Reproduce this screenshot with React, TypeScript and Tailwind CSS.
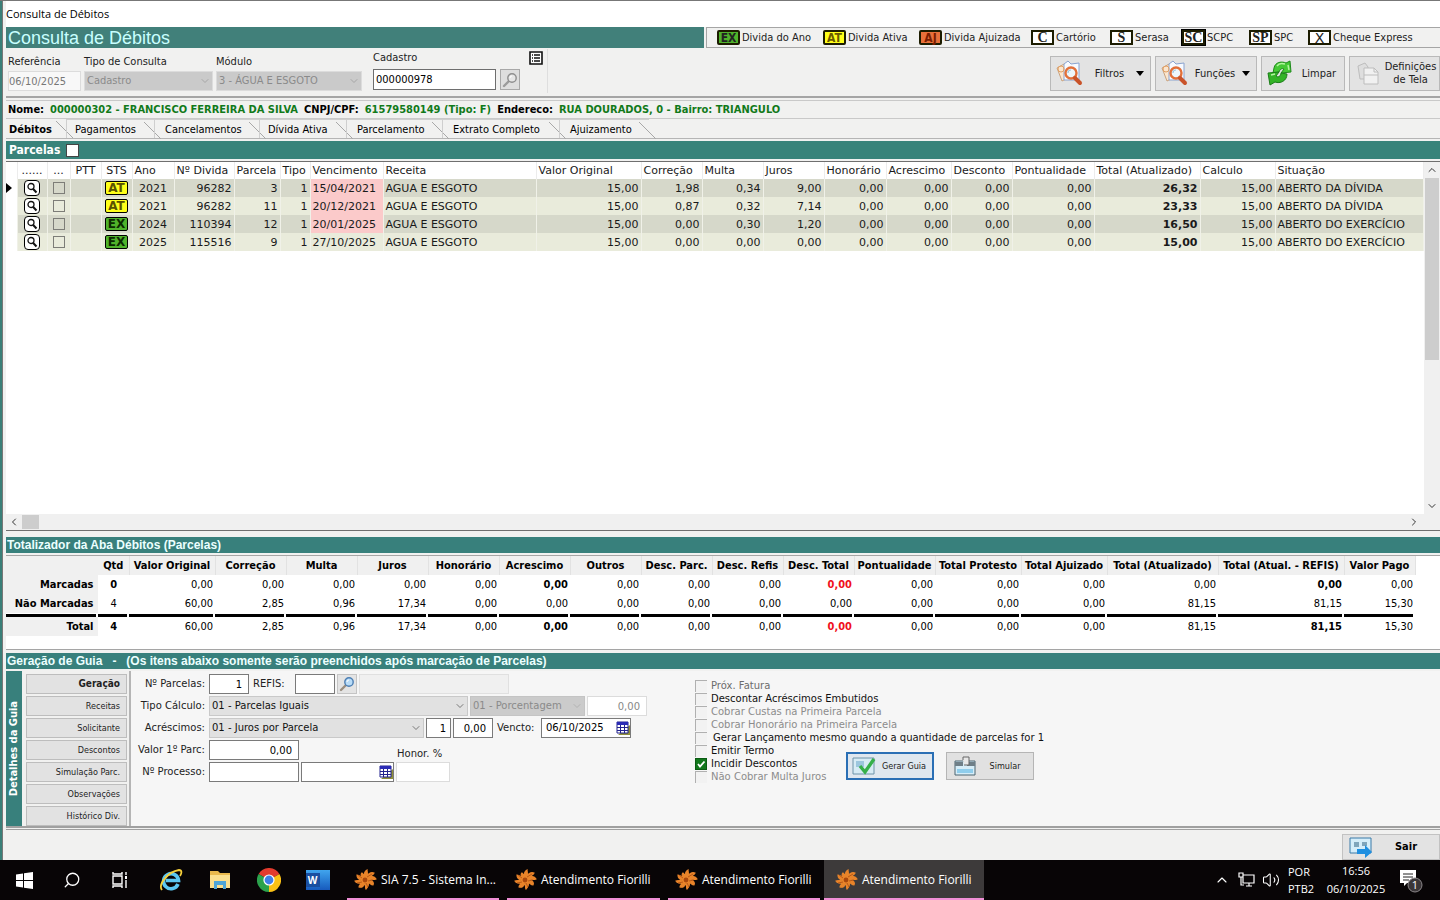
import type { ReactNode } from 'react';
import { ChevronUp, ChevronDown, ChevronLeft, ChevronRight, Search, Volume2 } from 'lucide-react';
import clsx from 'clsx';

const legend = [
  { code: 'EX', label: 'Divida do Ano', width: 'w-[106px]', tone: 'rounded-xs bg-[#4fb32b] text-[12px] font-bold' },
  { code: 'AT', label: 'Divida Ativa', width: 'w-[96px]', tone: 'rounded-xs bg-[#ffff1a] text-[12px] font-bold text-[#6b5a00]' },
  { code: 'AJ', label: 'Divida Ajuizada', width: 'w-[112px]', tone: 'rounded-xs bg-[#e8703a] text-[12px] font-bold text-[#7a1d00]' },
  { code: 'C', label: 'Cartório', width: 'w-[79px]', tone: "bg-white font-['Liberation_Serif',serif] text-[14px] font-bold" },
  { code: 'S', label: 'Serasa', width: 'w-[72px]', tone: "bg-white font-['Liberation_Serif',serif] text-[14px] font-bold" },
  { code: 'SC', label: 'SCPC', width: 'w-[67px]', tone: "bg-white font-['Liberation_Serif',serif] text-[14px] font-bold ring-1 ring-black" },
  { code: 'SP', label: 'SPC', width: 'w-[59px]', tone: "bg-white font-['Liberation_Serif',serif] text-[14px] font-bold" },
  { code: 'X', label: 'Cheque Express', width: 'w-[116px]', tone: "bg-white font-['DejaVu_Sans',sans-serif] text-[14px]" },
];

const tabs = [
  { label: 'Débitos', width: 'w-[60px] pl-[3px]' },
  { label: 'Pagamentos', width: 'w-[88px] pl-2' },
  { label: 'Cancelamentos', width: 'w-[105px] pl-2.5' },
  { label: 'Dívida Ativa', width: 'w-[87px] pl-2' },
  { label: 'Parcelamento', width: 'w-[96px] pl-2.5' },
  { label: 'Extrato Completo', width: 'w-[117px] pl-2.5' },
  { label: 'Ajuizamento', width: 'w-[90px] pl-2.5' },
];

const debtColumns = [
  { title: '', width: 'w-[11px]' },
  { title: '......', width: 'w-[30px]' },
  { title: '...', width: 'w-[23px]' },
  { title: 'PTT', width: 'w-[31px]' },
  { title: 'STS', width: 'w-[31px]' },
  { title: 'Ano', width: 'w-[42px]' },
  { title: 'Nº Divida', width: 'w-[60px]' },
  { title: 'Parcela', width: 'w-[46px]' },
  { title: 'Tipo', width: 'w-[30px]' },
  { title: 'Vencimento', width: 'w-[73px]' },
  { title: 'Receita', width: 'w-[153px]' },
  { title: 'Valor Original', width: 'w-[105px]' },
  { title: 'Correção', width: 'w-[61px]' },
  { title: 'Multa', width: 'w-[61px]' },
  { title: 'Juros', width: 'w-[61px]' },
  { title: 'Honorário', width: 'w-[62px]' },
  { title: 'Acrescimo', width: 'w-[65px]' },
  { title: 'Desconto', width: 'w-[61px]' },
  { title: 'Pontualidade', width: 'w-[82px]' },
  { title: 'Total (Atualizado)', width: 'w-[106px]' },
  { title: 'Calculo', width: 'w-[75px]' },
  { title: 'Situação', width: '' },
];

const debts = [
  {
    status: 'AT', year: '2021', debt: '96282', part: '3', due: '15/04/2021', late: true,
    values: ['15,00', '1,98', '0,34', '9,00', '0,00', '0,00', '0,00', '0,00'],
    total: '26,32', calc: '15,00', situation: 'ABERTO DA DÍVIDA',
  },
  {
    status: 'AT', year: '2021', debt: '96282', part: '11', due: '20/12/2021', late: true,
    values: ['15,00', '0,87', '0,32', '7,14', '0,00', '0,00', '0,00', '0,00'],
    total: '23,33', calc: '15,00', situation: 'ABERTO DA DÍVIDA',
  },
  {
    status: 'EX', year: '2024', debt: '110394', part: '12', due: '20/01/2025', late: true,
    values: ['15,00', '0,00', '0,30', '1,20', '0,00', '0,00', '0,00', '0,00'],
    total: '16,50', calc: '15,00', situation: 'ABERTO DO EXERCÍCIO',
  },
  {
    status: 'EX', year: '2025', debt: '115516', part: '9', due: '27/10/2025', late: false,
    values: ['15,00', '0,00', '0,00', '0,00', '0,00', '0,00', '0,00', '0,00'],
    total: '15,00', calc: '15,00', situation: 'ABERTO DO EXERCÍCIO',
  },
];

const sumColumns = [
  { title: 'Qtd', width: 'w-[31px]' },
  { title: 'Valor Original', width: 'w-[86px]' },
  { title: 'Correção', width: 'w-[71px]' },
  { title: 'Multa', width: 'w-[71px]' },
  { title: 'Juros', width: 'w-[71px]' },
  { title: 'Honorário', width: 'w-[71px]' },
  { title: 'Acrescimo', width: 'w-[71px]' },
  { title: 'Outros', width: 'w-[71px]' },
  { title: 'Desc. Parc.', width: 'w-[71px]' },
  { title: 'Desc. Refis', width: 'w-[71px]' },
  { title: 'Desc. Total', width: 'w-[71px]' },
  { title: 'Pontualidade', width: 'w-[81px]' },
  { title: 'Total Protesto', width: 'w-[86px]' },
  { title: 'Total Ajuizado', width: 'w-[86px]' },
  { title: 'Total (Atualizado)', width: 'w-[111px]' },
  { title: 'Total (Atual. - REFIS)', width: 'w-[126px]' },
  { title: 'Valor Pago', width: 'w-[71px]' },
];

const sums = [
  { name: 'Marcadas', strong: true, cells: ['0', '0,00', '0,00', '0,00', '0,00', '0,00', '0,00', '0,00', '0,00', '0,00', '0,00', '0,00', '0,00', '0,00', '0,00', '0,00', '0,00'] },
  { name: 'Não Marcadas', strong: false, cells: ['4', '60,00', '2,85', '0,96', '17,34', '0,00', '0,00', '0,00', '0,00', '0,00', '0,00', '0,00', '0,00', '0,00', '81,15', '81,15', '15,30'] },
];

const grandTotal = { name: 'Total', strong: true, cells: ['4', '60,00', '2,85', '0,96', '17,34', '0,00', '0,00', '0,00', '0,00', '0,00', '0,00', '0,00', '0,00', '0,00', '81,15', '81,15', '15,30'] };

const steps = ['Geração', 'Receitas', 'Solicitante', 'Descontos', 'Simulação Parc.', 'Observações', 'Histórico Div.'];

const mainOptions = [
  { label: 'Próx. Fatura', disabled: true, strong: true },
  { label: 'Descontar Acréscimos Embutidos' },
  { label: 'Cobrar Custas na Primeira Parcela', disabled: true },
  { label: 'Cobrar Honorário na Primeira Parcela', disabled: true },
  { label: 'Gerar Lançamento mesmo quando a quantidade de parcelas for 1', indent: true },
];

const extraOptions = [
  { label: 'Emitir Termo' },
  { label: 'Incidir Descontos', checked: true },
  { label: 'Não Cobrar Multa Juros', disabled: true },
];

const tasks = [
  { label: 'SIA 7.5 - Sistema In...', style: 'w-[152px] pl-1.5 mr-2' },
  { label: 'Atendimento Fiorilli', style: 'w-[153px] pl-1.5 mr-2' },
  { label: 'Atendimento Fiorilli', style: 'w-[152px] pl-1.5 mr-1' },
  { label: 'Atendimento Fiorilli', style: 'w-[160px] pl-2.5 bg-[#3d3a3a]' },
];

function Badge({ code, tone }: { code: string; tone: string }) {
  return (
    <span className={clsx('inline-flex h-[15px] w-[23px] shrink-0 items-center justify-center border-2 border-[#1c1c00] leading-none', tone)}>
      {code}
    </span>
  );
}

function StatusBadge({ code }: { code: string }) {
  return (
    <span
      className={clsx(
        'mx-auto flex h-[14px] w-[23px] items-center justify-center rounded-xs border border-black text-[12px] font-bold leading-none',
        code === 'AT' ? 'bg-[#ffff1a] text-[#5a5200]' : 'bg-[#4fb32b] text-[#0b2a00]',
      )}
    >
      {code}
    </span>
  );
}

function SearchPapers() {
  return (
    <svg width="28" height="26" viewBox="0 0 28 26">
      <path d="M2 8l7-4 4 14-6 3z" fill="#fbe6cf" stroke="#c9a27e" />
      <path d="M9 4l4-3 3 3 8-1v17H9z" fill="#f7faff" stroke="#8aa3cf" />
      <circle cx="6" cy="9" r="3" fill="none" stroke="#e3a063" />
      <circle cx="16" cy="13" r="5.5" fill="#eef6fb" stroke="#e2703a" strokeWidth="2.4" />
      <path d="M13 13a3 3 0 013-3" fill="none" stroke="#9fc7e0" strokeWidth="1.2" />
      <path d="M20 18l5 5" stroke="#c9532a" strokeWidth="4" strokeLinecap="round" />
    </svg>
  );
}

function Recycle() {
  return (
    <svg width="28" height="26" viewBox="0 0 28 26" strokeLinejoin="round">
      <path d="M8 8c1-6 8-7 12-5l4-2 1 11-10 1 3-4c-2-1-4 0-5 3l-6 1z" fill="#45c935" stroke="#1f8a1b" />
      <path d="M21 14c0 7-7 10-12 8l-5 3-2-12 11-1-3 4c2 2 5 0 5-3z" fill="#33b327" stroke="#1b7d18" />
      <path d="M11 6c2-3 5-3 8-2M5 15l4-1M22 5l1 5" stroke="#b4f5a0" strokeWidth="1.5" fill="none" />
    </svg>
  );
}

function PrintPage() {
  return (
    <svg width="28" height="26" viewBox="0 0 28 26" fill="#f1f1f1" stroke="#bdbdbd">
      <path d="M4 6l7-3 3 4v12H6z" fill="#dedede" />
      <path d="M10 8h10l4 4v12H10z" />
      <path d="M20 8v4h4M10 15h14" fill="none" />
    </svg>
  );
}

function Lens({ muted = false }: { muted?: boolean }) {
  return (
    <svg width="16" height="16" viewBox="0 0 16 16">
      <path d="M7 9l-5 5" stroke={muted ? '#9b9b9b' : '#9b8f80'} strokeWidth="2.4" strokeLinecap="round" />
      <circle cx="10" cy="6" r="4.2" fill={muted ? '#e6e6e6' : '#b9dcf7'} stroke={muted ? '#8e8e8e' : '#4c7fb4'} strokeWidth="1.4" />
      <path d="M8 6a2 2 0 012-2" stroke="#fff" fill="none" />
    </svg>
  );
}

function Calendar() {
  return (
    <svg width="14" height="14" viewBox="0 0 14 14" className="shrink-0">
      <path d="M2 14h12V4z" fill="#8f8f3a" />
      <path d="M1 1h11v11H1z" fill="#fff" stroke="#23238e" />
      <path d="M1 1h11v3H1z" fill="#2b2bb5" />
      <path d="M1 6.5h11M1 9.5h11M4.5 4v8M8.5 4v8" stroke="#23238e" />
    </svg>
  );
}

function Burst() {
  return (
    <svg width="24" height="22" viewBox="0 0 24 22">
      <path
        d="M12 7c-1-3 0-5 2-6 0 2 1 3 0 6 2-3 4-4 7-3-1 2-3 2-4 4 3-1 5 0 6 2-2 1-4 0-6 1 3 1 4 3 3 5-2 0-3-2-5-3 1 3 0 5-2 7-1-2 0-4-1-6-1 3-3 5-6 4 0-2 2-3 3-5-3 2-6 1-7-1 2-1 4 0 6-1-3-1-4-3-4-5 2 0 4 2 5 3-1-2-1-4 0-5 1 1 2 2 3 3z"
        fill="#e8842a"
        stroke="#e8842a"
        strokeWidth="1.2"
      />
      <circle cx="12" cy="11" r="2.4" fill="#a8480d" />
      <path d="M14 8l5-3M15 12l5-1M9 9L5 6M9 13l-5 1M13 14l2 4" stroke="#a8480d" strokeWidth=".7" />
    </svg>
  );
}

function ToolButton({ icon, width, menu, children }: { icon: ReactNode; width: string; menu?: boolean; children: ReactNode }) {
  return (
    <button className={clsx('flex h-[35px] items-center border border-[#b9b9b9] bg-[#e3e3e3] pl-1 text-[11px] leading-[13px]', width)}>
      {icon}
      <span className="flex-1 text-center">{children}</span>
      {menu && <span className="mr-1.5 border-x-4 border-t-5 border-x-transparent border-t-black" />}
    </button>
  );
}

function Combo({ id, value, className, wrap, chevron = 'text-[#555]', disabled, label }: {
  id: string; value: string; className: string; wrap: string; chevron?: string; disabled?: boolean; label?: string;
}) {
  return (
    <div className={clsx('relative', wrap)}>
      <select id={id} aria-label={label} disabled={disabled} className={clsx('w-full appearance-none border pl-0.5', className)}>
        <option>{value}</option>
      </select>
      <ChevronDown className={clsx('pointer-events-none absolute right-0.5 top-1 size-3', chevron)} strokeWidth={1.5} />
    </div>
  );
}

function Option({ label, disabled, checked, indent, strong }: {
  label: string; disabled?: boolean; checked?: boolean; indent?: boolean; strong?: boolean;
}) {
  return (
    <label className={clsx('flex h-[13px] items-center gap-1 whitespace-nowrap', disabled ? (strong ? 'text-[#6c6c6c]' : 'text-[#8c8c8c]') : 'text-[#111]')}>
      <span className="grid shrink-0">
        <input
          type="checkbox"
          disabled={disabled}
          defaultChecked={checked}
          className="col-start-1 row-start-1 size-3 appearance-none border-l border-t border-[#b0b0b0] bg-[#f2f2f2] checked:border checked:border-[#0a5a12] checked:bg-[#12781c]"
        />
        {checked && (
          <svg viewBox="0 0 12 12" className="pointer-events-none col-start-1 row-start-1 size-3">
            <path d="M3 6l2 2.5L9.500 3.500" fill="none" stroke="#fff" strokeWidth="1.8" />
          </svg>
        )}
      </span>
      <span className={clsx(indent && 'pl-0.5')}>{label}</span>
    </label>
  );
}

function Header() {
  return (
    <header>
      <div className="flex h-[26px] items-center bg-white font-['Open_Sans',sans-serif] text-[11px] text-black">Consulta de Débitos</div>
      <div className="flex h-[21px] items-stretch gap-0.5">
        <h1 className="flex flex-1 items-center bg-[#41807a] pl-0.5 font-['Liberation_Sans',sans-serif] text-[18px] leading-none text-[#c8ffff]">
          Consulta de Débitos
        </h1>
        <ul className="flex items-center border-y border-l border-[#a5a5a5] pl-2.5 pr-4">
          {legend.map((item) => (
            <li key={item.code} className={clsx('flex items-center gap-0.5 whitespace-nowrap', item.width)}>
              <Badge code={item.code} tone={item.tone} />
              {item.label}
            </li>
          ))}
        </ul>
      </div>
      <div className="mt-0.5 flex h-12 items-center border-b-2 border-[#a5a5a5] pb-1">
        <div className="flex gap-[3px] pl-0.5 pt-1 text-[#222]">
          <div className="flex w-[73px] flex-col">
            <label htmlFor="ref" className="h-4">Referência</label>
            <input id="ref" disabled defaultValue="06/10/2025" className="h-5 border border-[#dcdcdc] bg-[#f8f8f8] text-[11px] text-[#777]" />
          </div>
          <div className="flex flex-col">
            <label htmlFor="tipo" className="h-4">Tipo de Consulta</label>
            <Combo id="tipo" value="Cadastro" disabled wrap="w-[129px]" chevron="text-[#999]" className="h-5 border-[#dcdcdc] bg-[#cacaca] text-[#8a8a8a]" />
          </div>
          <div className="flex flex-col">
            <label htmlFor="modulo" className="h-4">Módulo</label>
            <Combo id="modulo" value="3 - ÁGUA E ESGOTO" disabled wrap="w-[146px]" chevron="text-[#999]" className="h-5 border-[#dcdcdc] bg-[#cacaca] text-[#8a8a8a]" />
          </div>
        </div>
        <div className="ml-2 flex h-11 w-[178px] flex-col border-r border-[#dedede] pl-[3px]">
          <div className="flex h-[18px] items-center">
            <label htmlFor="cadastro">Cadastro</label>
            <button aria-label="Lista" className="ml-auto mr-1">
              <svg width="14" height="14" viewBox="0 0 14 14">
                <path d="M1 1h12v12H1z" fill="#fff" stroke="#111" strokeWidth="1.6" />
                <path d="M5 4h6M5 7h6M5 10h6M3 4h1M3 7h1M3 10h1" stroke="#111" strokeWidth="1.4" />
              </svg>
            </button>
          </div>
          <div className="mt-0.5 flex gap-1">
            <input id="cadastro" defaultValue="000000978" className="h-[21px] w-[123px] border border-[#6e6e6e] bg-white pl-0.5 text-black" />
            <button aria-label="Buscar" className="flex h-[21px] w-5 items-center justify-center border border-[#a8a8a8] bg-[#dedede]">
              <Lens muted />
            </button>
          </div>
        </div>
        <div className="ml-auto flex gap-1 pt-1">
          <ToolButton icon={<SearchPapers />} width="w-[101px]" menu>Filtros</ToolButton>
          <ToolButton icon={<SearchPapers />} width="w-[102px]" menu>Funções</ToolButton>
          <ToolButton icon={<Recycle />} width="w-[84px]">Limpar</ToolButton>
          <ToolButton icon={<PrintPage />} width="w-[91px]">Definições de Tela</ToolButton>
        </div>
      </div>
      <p className="mt-0.5 flex h-[19px] items-center gap-1.5 whitespace-nowrap border-y border-[#c9c9c9] pl-0.5 font-bold text-black">
        Nome: <span className="text-[#117a1a]">000000302 - FRANCISCO FERREIRA DA SILVA</span>
        CNPJ/CPF: <span className="text-[#117a1a]">61579580149 (Tipo: F)</span>
        Endereco: <span className="text-[#117a1a]">RUA DOURADOS, 0 - Bairro: TRIANGULO</span>
      </p>
      <nav className="flex h-5 border-b border-[#b5b5b5]">
        {tabs.map((tab, i) => (
          <button key={tab.label} className={clsx('flex items-center whitespace-nowrap pt-0.5 text-black', tab.width, i === 0 ? 'font-bold' : 'border-l border-t border-[#cfcfcf]')}>
            {tab.label}
            <svg width="18" height="17" viewBox="0 0 18 17" className="-mr-2 ml-auto shrink-0">
              <path d="M0 0l17 17" stroke="#a8a8a8" fill="none" />
            </svg>
          </button>
        ))}
      </nav>
      <div className="mt-0.5 flex h-[18px] items-center gap-1.5 bg-[#38837a] pl-[3px] text-[12px] font-bold text-white">
        <label htmlFor="all">Parcelas</label>
        <input id="all" type="checkbox" className="size-[13px] appearance-none border border-[#444] bg-white" />
      </div>
    </header>
  );
}

function DebtTable() {
  return (
    <section className="mt-0.5 flex flex-1 flex-col border-y border-[#6f6f6f] bg-white">
      <div className="flex flex-1">
        <div className="min-w-0 flex-1">
          <table className="w-full table-fixed font-['DejaVu_Sans',sans-serif] text-[11px] text-[#1a1a1a]">
            <colgroup>
              {debtColumns.map((col, i) => <col key={i} className={col.width} />)}
            </colgroup>
            <thead>
              <tr className="h-[17px]">
                {debtColumns.map((col, i) => (
                  <th key={i} className={clsx('whitespace-nowrap border-r border-[#ececec] font-normal', i < 5 ? 'text-center' : 'pl-0.5 text-left')}>{col.title}</th>
                ))}
              </tr>
            </thead>
            <tbody>
              {debts.map((row, i) => (
                <tr key={i} className={clsx('h-[18px] [&>td]:border-r [&>td]:border-[#f0f1e8] [&>td]:whitespace-nowrap [&>td]:leading-[17px]', i % 2 === 0 ? 'bg-[#d6d8ca]' : 'bg-[#e9ebdb]')}>
                  <td className="bg-white">
                    {i === 0 && <span className="block size-0 border-y-5 border-l-6 border-y-transparent border-l-black" />}
                  </td>
                  <td>
                    <button aria-label="Detalhar" className="mx-auto flex size-4 items-center justify-center rounded-sm border border-black bg-white">
                      <svg width="12" height="12" viewBox="0 0 12 12" fill="none" stroke="#111">
                        <circle cx="5" cy="4.500" r="3" strokeWidth="1.3" />
                        <path d="M7.200 7l3.300 3.500" strokeWidth="2" />
                      </svg>
                    </button>
                  </td>
                  <td><input type="checkbox" aria-label="Marcar parcela" className="mx-auto block size-3 appearance-none border border-[#7d7d78]" /></td>
                  <td />
                  <td><StatusBadge code={row.status} /></td>
                  <td className="text-center">{row.year}</td>
                  <td className="pr-0.5 text-right">{row.debt}</td>
                  <td className="pr-0.5 text-right">{row.part}</td>
                  <td className="pr-0.5 text-right">1</td>
                  <td className={clsx('pl-0.5', row.late && 'bg-[#fbcaca]')}>{row.due}</td>
                  <td className="pl-0.5">AGUA E ESGOTO</td>
                  {row.values.map((value, n) => <td key={n} className="pr-0.5 text-right">{value}</td>)}
                  <td className="pr-0.5 text-right font-bold">{row.total}</td>
                  <td className="pr-0.5 text-right">{row.calc}</td>
                  <td className="pl-0.5">{row.situation}</td>
                </tr>
              ))}
            </tbody>
          </table>
        </div>
        <div className="flex w-4 flex-col items-center bg-[#f0f0f0]">
          <ChevronUp className="my-0.5 size-3 text-[#333]" />
          <div className="h-[182px] w-3.5 bg-[#cdcdcd]" />
          <ChevronDown className="mb-0.5 mt-auto size-3 text-[#333]" />
        </div>
      </div>
      <div className="flex h-4 items-center bg-[#f0f0f0] pr-5">
        <ChevronLeft className="mx-0.5 size-3 text-[#333]" />
        <div className="h-3.5 w-[17px] bg-[#cdcdcd]" />
        <ChevronRight className="ml-auto size-3 text-[#333]" />
      </div>
    </section>
  );
}

function Band({ children }: { children: ReactNode }) {
  return (
    <h2 className="flex h-4 items-center whitespace-pre bg-[#38807c] pl-px font-['Liberation_Sans',sans-serif] text-[12px] font-bold leading-none text-[#ecffff]">
      {children}
    </h2>
  );
}

function SumRow({ row }: { row: typeof grandTotal }) {
  return (
    <tr className="h-[19px]">
      <th className="border-r border-white bg-[#f0f0f0] pr-1 text-right font-bold">{row.name}</th>
      {row.cells.map((cell, i) => (
        <td
          key={i}
          className={clsx(
            i === 0 ? 'text-center' : 'pr-0.5 text-right',
            row.strong && (i === 0 || i === 6 || i === 10 || i === 15) && 'font-bold',
            row.strong && i === 10 && 'text-[#f01020]',
          )}
        >
          {cell}
        </td>
      ))}
      <td />
    </tr>
  );
}

function Totals() {
  return (
    <section className="mt-1.5">
      <Band>Totalizador da Aba Débitos (Parcelas)</Band>
      <div className="mt-0.5 h-[95px] border-y border-[#a5a5a5] bg-white">
        <table className="w-full table-fixed text-[11px] text-black">
          <colgroup>
            <col className="w-[92px]" />
            {sumColumns.map((col) => <col key={col.title} className={col.width} />)}
            <col />
          </colgroup>
          <thead>
            <tr className="h-[19px] bg-[#f0f0f0]">
              <td />
              {sumColumns.map((col) => (
                <th key={col.title} className="whitespace-nowrap border-r border-[#e2e2e2] text-center font-bold">{col.title}</th>
              ))}
              <td className="bg-white" />
            </tr>
          </thead>
          <tbody>
            {sums.map((row) => <SumRow key={row.name} row={row} />)}
          </tbody>
          <tfoot>
            <tr aria-hidden="true">
              <td className="pt-px"><div className="mr-0.5 h-[3px] bg-black" /></td>
              {sumColumns.map((col) => (
                <td key={col.title} className="pt-px"><div className="mr-0.5 h-[3px] bg-black" /></td>
              ))}
              <td />
            </tr>
            <SumRow row={grandTotal} />
          </tfoot>
        </table>
      </div>
    </section>
  );
}

const box = 'h-5 border border-[#7a7a7a] bg-white px-1 text-right text-black';
const flatBox = 'h-5 border border-[#dcdcdc] bg-white px-1 text-right text-[#888]';
const rowLabel = 'w-[74px] shrink-0 pr-0.5 text-right text-[#222]';

function GuideForm() {
  return (
    <section className="mt-[3px]">
      <Band>{'Geração de Guia   -   (Os itens abaixo somente serão preenchidos após marcação de Parcelas)'}</Band>
      <div className="mt-0.5 flex h-[157px] overflow-hidden border-b-2 border-[#a0a0a0]">
        <div className="flex w-4 items-center justify-center bg-[#38807c]">
          <span className="rotate-180 whitespace-nowrap text-[11px] font-bold leading-4 text-white [writing-mode:vertical-rl]">Detalhes da Guia</span>
        </div>
        <div className="ml-1 flex w-[103px] flex-col gap-0.5 pr-0.5 pt-[3px]">
          {steps.map((step, i) => (
            <button key={step} className={clsx('h-5 shrink-0 border border-[#bdbdbd] bg-[#e2e2e2] pr-1.5 text-right leading-3', i === 0 ? 'text-[10px] font-bold' : 'text-[9px]')}>
              {step}
            </button>
          ))}
        </div>
        <div className="flex flex-1 border-l-2 border-[#b5b5b5] bg-[#f6f6f6] font-['DejaVu_Sans',sans-serif] text-[10px]">
          <div className="flex w-[564px] flex-col gap-0.5 pl-0.5 pt-[3px]">
            <div className="flex items-center gap-0.5">
              <label htmlFor="parcelas" className={rowLabel}>Nº Parcelas:</label>
              <input id="parcelas" defaultValue="1" className={clsx(box, 'w-10 pr-1.5')} />
              <label htmlFor="refis" className="w-[42px] pl-0.5">REFIS:</label>
              <input id="refis" className={clsx(box, 'w-10')} />
              <button aria-label="Buscar REFIS" className="flex size-5 items-center justify-center border border-[#c4c4c4] bg-[#e4e4e4]"><Lens /></button>
              <input aria-label="Descrição REFIS" disabled className="h-5 w-[150px] border border-[#e0e0e0] bg-[#f0f0f0]" />
            </div>
            <div className="flex items-center gap-0.5">
              <label htmlFor="calculo" className={rowLabel}>Tipo Cálculo:</label>
              <Combo id="calculo" value="01 - Parcelas Iguais" wrap="w-[259px]" className="h-5 border-[#c9c9c9] bg-[#e1e1e1] text-[#111]" />
              <Combo id="modo" label="Modo" value="01 - Porcentagem" disabled wrap="w-[115px]" chevron="text-[#aaa]" className="h-5 border-[#c4c4c4] bg-[#cbcbcb] text-[#8a8a8a]" />
              <input aria-label="Porcentagem" disabled defaultValue="0,00" className={clsx(flatBox, 'w-[60px] pr-1.5')} />
            </div>
            <div className="flex items-center gap-0.5">
              <label htmlFor="acrescimos" className={rowLabel}>Acréscimos:</label>
              <Combo id="acrescimos" value="01 - Juros por Parcela" wrap="w-[215px]" className="h-5 border-[#c9c9c9] bg-[#e1e1e1] text-[#111]" />
              <input aria-label="Quantidade" defaultValue="1" className={clsx(box, 'w-[25px]')} />
              <input aria-label="Valor juros" defaultValue="0,00" className={clsx(box, 'w-10 pr-1.5')} />
              <label htmlFor="vencto" className="w-11 pl-0.5">Vencto:</label>
              <span className="flex h-5 w-[90px] items-center border border-[#7a7a7a] bg-white pl-1">
                <input id="vencto" defaultValue="06/10/2025" className="min-w-0 flex-1 text-black" />
                <Calendar />
              </span>
            </div>
            <div className="flex items-center gap-0.5">
              <label htmlFor="valor" className={rowLabel}>Valor 1º Parc:</label>
              <input id="valor" defaultValue="0,00" className={clsx(box, 'w-[90px] pr-1.5')} />
              <label htmlFor="honor" className="ml-24 pt-2 leading-3">Honor. %</label>
            </div>
            <div className="flex items-center gap-0.5">
              <label htmlFor="processo" className={rowLabel}>Nº Processo:</label>
              <input id="processo" className={clsx(box, 'w-[90px]')} />
              <span className="flex h-5 w-[93px] items-center border border-[#7a7a7a] bg-white pl-1">
                <input aria-label="Data do processo" className="min-w-0 flex-1" />
                <Calendar />
              </span>
              <input id="honor" className={clsx(flatBox, 'w-[54px]')} />
            </div>
          </div>
          <div className="pt-2">
            {mainOptions.map((option) => <Option key={option.label} {...option} />)}
            <div className="flex items-start">
              <div className="w-[151px]">
                {extraOptions.map((option) => <Option key={option.label} {...option} />)}
              </div>
              <div className="flex gap-3 pt-2 font-['DejaVu_Sans_Condensed','DejaVu_Sans',sans-serif] text-[9px]">
                <button className="flex h-7 w-[88px] items-center border-2 border-[#2a6fb5] bg-[#dfe7ef] pl-1">
                  <svg width="24" height="20" viewBox="0 0 24 20">
                    <path d="M1 2h21v16H1z" fill="#d7ebf5" stroke="#6f93a8" />
                    <path d="M4 5h8v6H4z" fill="#9cc6de" />
                    <path d="M8 10l5 6 9-13" fill="none" stroke="#36b04a" strokeWidth="3.4" />
                  </svg>
                  <span className="flex-1 text-center">Gerar Guia</span>
                </button>
                <button className="flex h-7 w-[88px] items-center border border-[#b5b5b5] bg-[#e1e1e1] pl-1.5">
                  <svg width="24" height="22" viewBox="0 0 24 22">
                    <path d="M2 6h20v14H2z" fill="#d6edf8" stroke="#4c6470" />
                    <path d="M2 7h8v4H2zM14 7h8v4h-8z" fill="#6f7f88" />
                    <path d="M10 5V2h6v8h-5" fill="#e8e8e8" stroke="#666" />
                    <path d="M4 14h16v4H4z" fill="#8fcdec" />
                  </svg>
                  <span className="flex-1 text-center">Simular</span>
                </button>
              </div>
            </div>
          </div>
        </div>
      </div>
      <div className="mt-px flex h-[31px] items-start border-t border-[#a0a0a0] pt-1">
        <button className="ml-auto flex h-[26px] w-[98px] items-center border border-[#c2c2c2] bg-[#e3e3e3] pl-1.5 text-[11px] font-bold text-black">
          <svg width="24" height="24" viewBox="0 0 24 24">
            <path d="M1 3h21v15H1z" fill="#d5edf9" stroke="#3b7ba8" />
            <path d="M5 7h5v5H5zM13 7h5v4h-5z" fill="#7fa5bb" />
            <path d="M8 14h8v-4l7 7-7 6v-4H8z" fill="#1f8fe0" />
          </svg>
          <span className="flex-1 text-center">Sair</span>
        </button>
      </div>
    </section>
  );
}

function Taskbar() {
  return (
    <footer className="flex h-10 items-stretch bg-[#080506] font-['Open_Sans',sans-serif] text-[12px] text-white">
      <div className="flex w-[347px] items-center">
        <button aria-label="Iniciar" className="flex w-12 justify-center">
          <svg width="17" height="17" viewBox="0 0 17 17" fill="#fff">
            <path d="M0 2.500l7-1V8H0zM8 1.300L17 0v8H8zM0 9h7v6.500l-7-1zM8 9h9v8l-9-1.300z" />
          </svg>
        </button>
        <button aria-label="Pesquisar" className="flex w-12 justify-center">
          <Search className="size-[18px] -scale-x-100" strokeWidth={1.7} />
        </button>
        <button aria-label="Visão de tarefas" className="flex w-12 justify-center">
          <svg width="18" height="18" viewBox="0 0 18 18" fill="none" stroke="#fff" strokeWidth="1.4">
            <path d="M2 5h9v8H2zM2 1v2h9V1M2 17v-2h9v2M15 1v3M15 9v8" />
            <path d="M14 5h2v3h-2z" fill="#fff" stroke="none" />
          </svg>
        </button>
        <button aria-label="Internet Explorer" className="flex w-[54px] justify-center">
          <svg width="24" height="24" viewBox="0 0 24 24" fill="none">
            <path d="M19 16a7.500 7.500 0 11.5-3.500H7" stroke="#5cc8f2" strokeWidth="3.6" />
            <path d="M3 22C-1 17 8 4 20 2c3 0 3 3 1 6" stroke="#f5cf3b" strokeWidth="1.8" />
          </svg>
        </button>
        <button aria-label="Explorador de arquivos" className="flex w-[44px] justify-center">
          <svg width="22" height="20" viewBox="0 0 22 20">
            <path d="M1 1h8l2 2h10v15H1z" fill="#e9b94c" />
            <path d="M1 5h20v13H1z" fill="#fbe08e" />
            <path d="M5 19v-8h12v8h-3v-4H8v4z" fill="#4fa6d8" />
          </svg>
        </button>
        <button aria-label="Google Chrome" className="flex w-[54px] justify-center">
          <svg width="24" height="24" viewBox="0 0 24 24">
            <path d="M12 12L1.600 6A12 12 0 0122.400 6z" fill="#e33b2e" />
            <path d="M12 12L22.400 6A12 12 0 0112 24z" fill="#fbc116" />
            <path d="M12 12v12A12 12 0 011.600 6z" fill="#2ba24c" />
            <circle cx="12" cy="12" r="5.600" fill="#fff" />
            <circle cx="12" cy="12" r="4.400" fill="#3f7fe8" />
          </svg>
        </button>
        <button aria-label="Word" className="flex w-[43px] justify-center">
          <span className="flex h-5 w-6 items-center bg-linear-to-b from-[#41a5ee] to-[#185abd]">
            <span className="flex h-3.5 w-3.5 items-center justify-center bg-[#1a4fa0] text-[10px] font-bold leading-none">W</span>
          </span>
        </button>
      </div>
      {tasks.map((task, i) => (
        <button key={i} className={clsx('flex items-center gap-1 whitespace-nowrap border-b-2 border-[#f08fd6] pt-0.5', task.style)}>
          <Burst />
          {task.label}
        </button>
      ))}
      <div className="ml-auto flex items-center pr-4">
        <ChevronUp className="mr-2 size-4" strokeWidth={1.7} />
        <svg width="18" height="16" viewBox="0 0 18 16" fill="none" stroke="#fff" strokeWidth="1.2" className="mr-1.5">
          <path d="M5 3h11v8H5zM8 14h6M11 11v3M1 1h4v4H1zM3 5v8h3" />
        </svg>
        <Volume2 className="mr-2 size-[18px]" strokeWidth={1.4} />
        <div className="w-7 text-[11px] leading-[17px]">POR<br />PTB2</div>
        <div className="mx-2 w-16 text-center text-[11px] leading-[18px]">16:56<br />06/10/2025</div>
        <svg width="28" height="28" viewBox="0 0 28 28">
          <path d="M4 4h16v13h-9l-3 3v-3H4z" fill="#fff" />
          <path d="M7 8h10M7 11h10M7 14h6" stroke="#222" />
          <circle cx="19" cy="19" r="7" fill="#3a3638" stroke="#8a8688" />
          <text x="19" y="23" textAnchor="middle" fontSize="11" fill="#fff">1</text>
        </svg>
      </div>
    </footer>
  );
}

export default function App() {
  return (
    <div className="flex min-h-screen flex-col overflow-x-hidden bg-[#f1f1f0] font-['DejaVu_Sans_Condensed','DejaVu_Sans',sans-serif] text-[11px] leading-[14px] text-[#222]">
      <div className="flex flex-1 border-t border-[#777]">
        <div className="w-[3px] border-r border-[#777] bg-[#3a7f78]" />
        <main className="flex min-w-0 flex-1 flex-col pl-[3px]">
          <Header />
          <DebtTable />
          <Totals />
          <GuideForm />
        </main>
      </div>
      <Taskbar />
    </div>
  );
}
